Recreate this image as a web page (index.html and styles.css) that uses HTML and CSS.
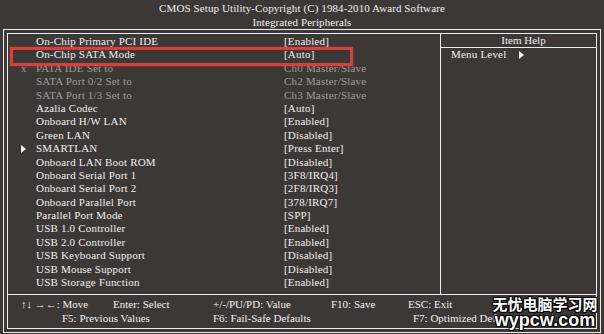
FILE: index.html
```html
<!DOCTYPE html>
<html lang="en">
<head>
    <meta charset="UTF-8">
    <title>CMOS Setup Utility</title>
    <link rel="stylesheet" href="styles.css">
</head>
<body>
    <header class="title">
        <div>CMOS Setup Utility-Copyright (C) 1984-2010 Award Software</div>
        <div>Integrated Peripherals</div>
    </header>
    <div class="frame">
        <div class="frame-inner">
            <div class="panes">
                <div class="items">
                    <div class="row"><span class="mark"></span><span>On-Chip Primary PCI IDE</span><span>[Enabled]</span></div>
                    <div class="row"><span class="mark"></span><span>On-Chip SATA Mode</span><span>[Auto]</span></div>
                    <div class="row off"><span class="mark">x</span><span>PATA IDE Set to</span><span>Ch0 Master/Slave</span></div>
                    <div class="row off"><span class="mark"></span><span>SATA Port 0/2 Set to</span><span>Ch2 Master/Slave</span></div>
                    <div class="row off"><span class="mark"></span><span>SATA Port 1/3 Set to</span><span>Ch3 Master/Slave</span></div>
                    <div class="row"><span class="mark"></span><span>Azalia Codec</span><span>[Auto]</span></div>
                    <div class="row"><span class="mark"></span><span>Onboard H/W LAN</span><span>[Enabled]</span></div>
                    <div class="row"><span class="mark"></span><span>Green LAN</span><span>[Disabled]</span></div>
                    <div class="row"><span class="mark"><i class="tri"></i></span><span>SMARTLAN</span><span>[Press Enter]</span></div>
                    <div class="row"><span class="mark"></span><span>Onboard LAN Boot ROM</span><span>[Disabled]</span></div>
                    <div class="row"><span class="mark"></span><span>Onboard Serial Port 1</span><span>[3F8/IRQ4]</span></div>
                    <div class="row"><span class="mark"></span><span>Onboard Serial Port 2</span><span>[2F8/IRQ3]</span></div>
                    <div class="row"><span class="mark"></span><span>Onboard Parallel Port</span><span>[378/IRQ7]</span></div>
                    <div class="row"><span class="mark"></span><span>Parallel Port Mode</span><span>[SPP]</span></div>
                    <div class="row"><span class="mark"></span><span>USB 1.0 Controller</span><span>[Enabled]</span></div>
                    <div class="row"><span class="mark"></span><span>USB 2.0 Controller</span><span>[Enabled]</span></div>
                    <div class="row"><span class="mark"></span><span>USB Keyboard Support</span><span>[Disabled]</span></div>
                    <div class="row"><span class="mark"></span><span>USB Mouse Support</span><span>[Disabled]</span></div>
                    <div class="row"><span class="mark"></span><span>USB Storage Function</span><span>[Enabled]</span></div>
                </div>
                <div class="help">
                    <div class="help-head">Item Help</div>
                    <div class="help-body">Menu Level <i class="tri help-tri"></i></div>
                </div>
            </div>
            <footer class="keys">
                <div class="keyrow first">
                    <span class="k1">&#8593;&#8595;&nbsp;&#8594;&#8592;: Move</span>
                    <span class="k2">Enter: Select</span>
                    <span class="k3">+/-/PU/PD: Value</span>
                    <span class="k4">F10: Save</span>
                    <span>ESC: Exit</span>
                </div>
                <div class="keyrow second">
                    <span class="k5">F5: Previous Values</span>
                    <span class="k6">F6: Fail-Safe Defaults</span>
                    <span>F7: Optimized Defaults</span>
                </div>
            </footer>
        </div>
    </div>
    <div class="highlight"></div>
    <div class="watermark">
        <div class="wm-cn">无忧电脑学习网</div>
        <div class="wm-url">wypcw.com</div>
    </div>
</body>
</html>
```

FILE: styles.css
```css
body{
    margin: 0;
    width: 604px;
    height: 334px;
    overflow: hidden;
    background-color: #3d3838;
    color: #f0efed;
    font: normal 11px "Liberation Serif", serif;
    position: relative;
}
.title{
    height: 29px;
    padding-top: 1px;
    box-sizing: border-box;
    text-align: center;
    line-height: 14px;
    letter-spacing: 0.1px;
}
.frame{
    margin-left: 3px;
    width: 598px;
    border: 1px solid #ececec;
    padding: 3px;
    box-sizing: border-box;
}
.frame-inner{
    border: 1px solid #ececec;
}
.panes{
    display: flex;
    height: 260px;
    border-bottom: 1px solid #ececec;
}
.items{
    width: 432px;
    padding-top: 1px;
    box-sizing: border-box;
}
.row{
    display: grid;
    grid-template-columns: 28px 248px 1fr;
    height: 13.4px;
    line-height: 13.4px;
    white-space: nowrap;
    letter-spacing: 0.2px;
}
.row.off{
    color: #9c9a9a;
}
.mark{
    padding-left: 13px;
}
.tri{
    display: inline-block;
    width: 0;
    height: 0;
    border-top: 4px solid transparent;
    border-bottom: 4px solid transparent;
    border-left: 5px solid #f0efed;
    vertical-align: -1px;
}
.help{
    flex: 1;
    border-left: 1px solid #ececec;
}
.help-head{
    height: 13px;
    line-height: 13px;
    padding-left: 10px;
    text-align: center;
    border-bottom: 1px solid #ececec;
}
.help-body{
    padding-left: 10px;
    line-height: 13px;
    white-space: nowrap;
    letter-spacing: 0.2px;
}
.help-tri{
    margin-left: 10px;
}
.keys{
    height: 33px;
    padding-top: 2px;
    box-sizing: border-box;
    line-height: 14px;
}
.keyrow{
    display: flex;
    white-space: nowrap;
}
.keyrow.first{
    padding-left: 13px;
}
.keyrow.second{
    padding-left: 54px;
}
.k1{ width: 92px; }
.k2{ width: 100px; }
.k3{ width: 118px; }
.k4{ width: 77px; }
.k5{ width: 151px; }
.k6{ width: 200px; }
.highlight{
    position: absolute;
    left: 10px;
    top: 47px;
    width: 343px;
    height: 19px;
    border: 3px solid #d8403c;
    box-sizing: border-box;
    box-shadow: 0 0 2px rgba(216, 64, 60, .6);
}
.watermark{
    position: absolute;
    left: 490px;
    top: 296px;
    width: 110px;
    text-align: center;
    white-space: nowrap;
    color: #ffffff;
    font-weight: bold;
    font-family: "Noto Sans CJK SC", "Liberation Sans", sans-serif;
    text-shadow: -1px -1px 0 #000, 1px -1px 0 #000, -1px 1px 0 #000, 1px 1px 0 #000, 0 0 2px #000;
}
.wm-cn{
    font-size: 15px;
    line-height: 16px;
    height: 16px;
}
.wm-url{
    font-family: "Liberation Sans", sans-serif;
    font-size: 18px;
    line-height: 16px;
    height: 16px;
}
```
